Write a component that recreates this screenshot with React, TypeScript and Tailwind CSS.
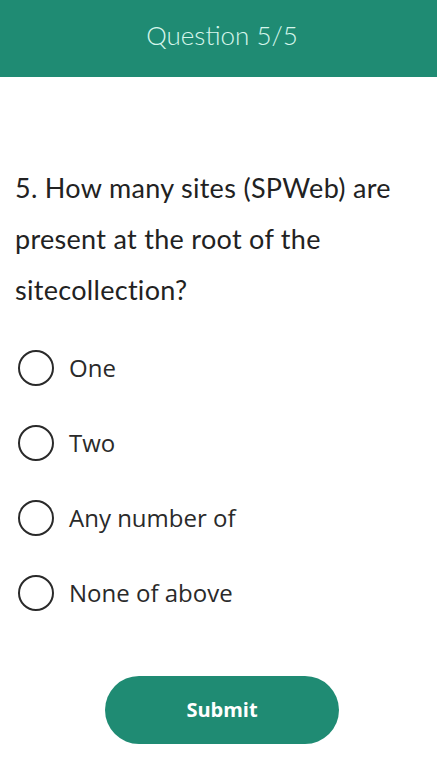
import React from "react";

const options = ["One", "Two", "Any number of", "None of above"];

export default function App() {
  return (
    <div className="w-[437px] h-[768px] bg-white overflow-hidden">
      <div className="h-[77px] bg-[#1f8b73] flex items-center justify-center pl-[7px] pb-[8px]">
        <span
          className="text-[26px] font-light text-[#d6f6ec] leading-none"
          style={{ fontFamily: "Lato, sans-serif" }}
        >
          Question 5/5
        </span>
      </div>
      <p
        className="mt-[85px] px-[15px] text-[27px] leading-[51px] tracking-[0.3px] text-[#222222]"
        style={{ fontFamily: "Lato, sans-serif" }}
      >
        5. How many sites (SPWeb) are present at the root of the sitecollection?
      </p>
      <div className="mt-[15px] flex flex-col">
        {options.map((o) => (
          <div key={o} className="h-[75px] flex items-center pl-[18px]">
            <span className="w-[36px] h-[36px] rounded-full border-2 border-[#2a2a2a] shrink-0" />
            <span
              className="ml-[15px] text-[24px] text-[#2a2a2a] tracking-[0px]"
              style={{ fontFamily: "'Open Sans', sans-serif" }}
            >
              {o}
            </span>
          </div>
        ))}
      </div>
      <div className="mt-[46px] flex justify-center pl-[7px]">
        <button
          className="w-[234px] h-[68px] rounded-full bg-[#1f8b73] text-white text-[20px] font-bold"
          style={{ fontFamily: "'Open Sans', sans-serif" }}
        >
          Submit
        </button>
      </div>
    </div>
  );
}
